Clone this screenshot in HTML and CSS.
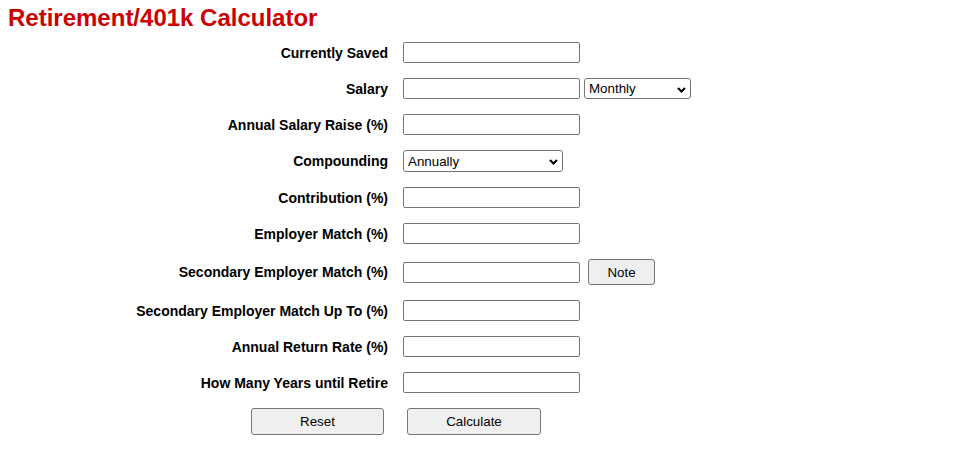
FILE: index.html
```html
<!DOCTYPE html>
<html>
<head>
<meta charset="utf-8">
<title>Retirement/401k Calculator</title>
<link rel="stylesheet" href="styles.css">
</head>
<body>
<h1 class="title">Retirement/401k Calculator</h1>
<form class="calc">
  <label class="lbl">Currently Saved</label>
  <div class="ctl"><input class="txt" type="text"></div>

  <label class="lbl">Salary</label>
  <div class="ctl">
    <input class="txt" type="text">
    <span class="sel-wrap">
      <select class="sel sel-period"><option>Monthly</option><option>Annually</option></select>
      <svg class="chev" width="9" height="6" viewBox="0 0 9 6"><path d="M1 1 L4.5 4.5 L8 1" fill="none" stroke="#000" stroke-width="2"/></svg>
    </span>
  </div>

  <label class="lbl">Annual Salary Raise (%)</label>
  <div class="ctl"><input class="txt" type="text"></div>

  <label class="lbl">Compounding</label>
  <div class="ctl">
    <span class="sel-wrap">
      <select class="sel sel-comp"><option>Annually</option><option>Monthly</option></select>
      <svg class="chev" width="9" height="6" viewBox="0 0 9 6"><path d="M1 1 L4.5 4.5 L8 1" fill="none" stroke="#000" stroke-width="2"/></svg>
    </span>
  </div>

  <label class="lbl">Contribution (%)</label>
  <div class="ctl"><input class="txt" type="text"></div>

  <label class="lbl">Employer Match (%)</label>
  <div class="ctl"><input class="txt" type="text"></div>

  <label class="lbl">Secondary Employer Match (%)</label>
  <div class="ctl ctl-note">
    <input class="txt" type="text">
    <button class="btn btn-note" type="button">Note</button>
  </div>

  <label class="lbl">Secondary Employer Match Up To (%)</label>
  <div class="ctl"><input class="txt" type="text"></div>

  <label class="lbl">Annual Return Rate (%)</label>
  <div class="ctl"><input class="txt" type="text"></div>

  <label class="lbl">How Many Years until Retire</label>
  <div class="ctl"><input class="txt" type="text"></div>

  <button class="btn btn-reset" type="reset">Reset</button>
  <button class="btn btn-calc" type="button">Calculate</button>
</form>
</body>
</html>
```
FILE: styles.css
```css
html, body {
  margin: 0;
  padding: 0;
  background: #fff;
}
body {
  padding: 0 8px;
  font-family: "Liberation Sans", Arial, sans-serif;
  color: #000;
}
.title {
  margin: 4px 0 0;
  font-size: 24px;
  line-height: 27px;
  font-weight: bold;
  color: #cc0000;
}
.calc {
  display: grid;
  grid-template-columns: 270px max-content;
  column-gap: 15px;
  row-gap: 15px;
  align-items: center;
  margin: 11px 0 0 110px;
}
.lbl {
  text-align: right;
  white-space: nowrap;
  font-size: 14px;
  font-weight: bold;
  line-height: 16px;
}
.ctl {
  display: flex;
  align-items: center;
  gap: 4px;
}
.ctl-note {
  gap: 8px;
}
.txt {
  box-sizing: border-box;
  width: 177px;
  height: 21px;
  margin: 0;
  padding: 1px 3px;
  border: 1px solid #767676;
  border-radius: 2px;
  background: #fff;
  font-family: "Liberation Sans", Arial, sans-serif;
  font-size: 13.33px;
}
.sel-wrap {
  position: relative;
  display: inline-block;
  line-height: 0;
}
.sel {
  -webkit-appearance: none;
  appearance: none;
  box-sizing: border-box;
  margin: 0;
  padding: 0 16px 0 4px;
  border: 1px solid #767676;
  border-radius: 3px;
  background: #fff;
  color: #000;
  font-family: "Liberation Sans", Arial, sans-serif;
  font-size: 13.33px;
}
.sel-period {
  width: 107px;
  height: 21px;
}
.sel-comp {
  width: 160px;
  height: 22px;
}
.chev {
  position: absolute;
  right: 5px;
  top: 50%;
  margin-top: -2px;
  pointer-events: none;
}
.btn {
  box-sizing: border-box;
  margin: 0;
  padding: 0;
  border: 1px solid #767676;
  border-radius: 3px;
  background: #efefef;
  color: #000;
  font-family: "Liberation Sans", Arial, sans-serif;
  font-size: 13.33px;
}
.btn-note {
  width: 67px;
  height: 26px;
}
.btn-reset {
  justify-self: end;
  width: 133px;
  height: 27px;
  margin-right: 4px;
}
.btn-calc {
  justify-self: start;
  width: 134px;
  height: 27px;
  margin-left: 4px;
}
```
